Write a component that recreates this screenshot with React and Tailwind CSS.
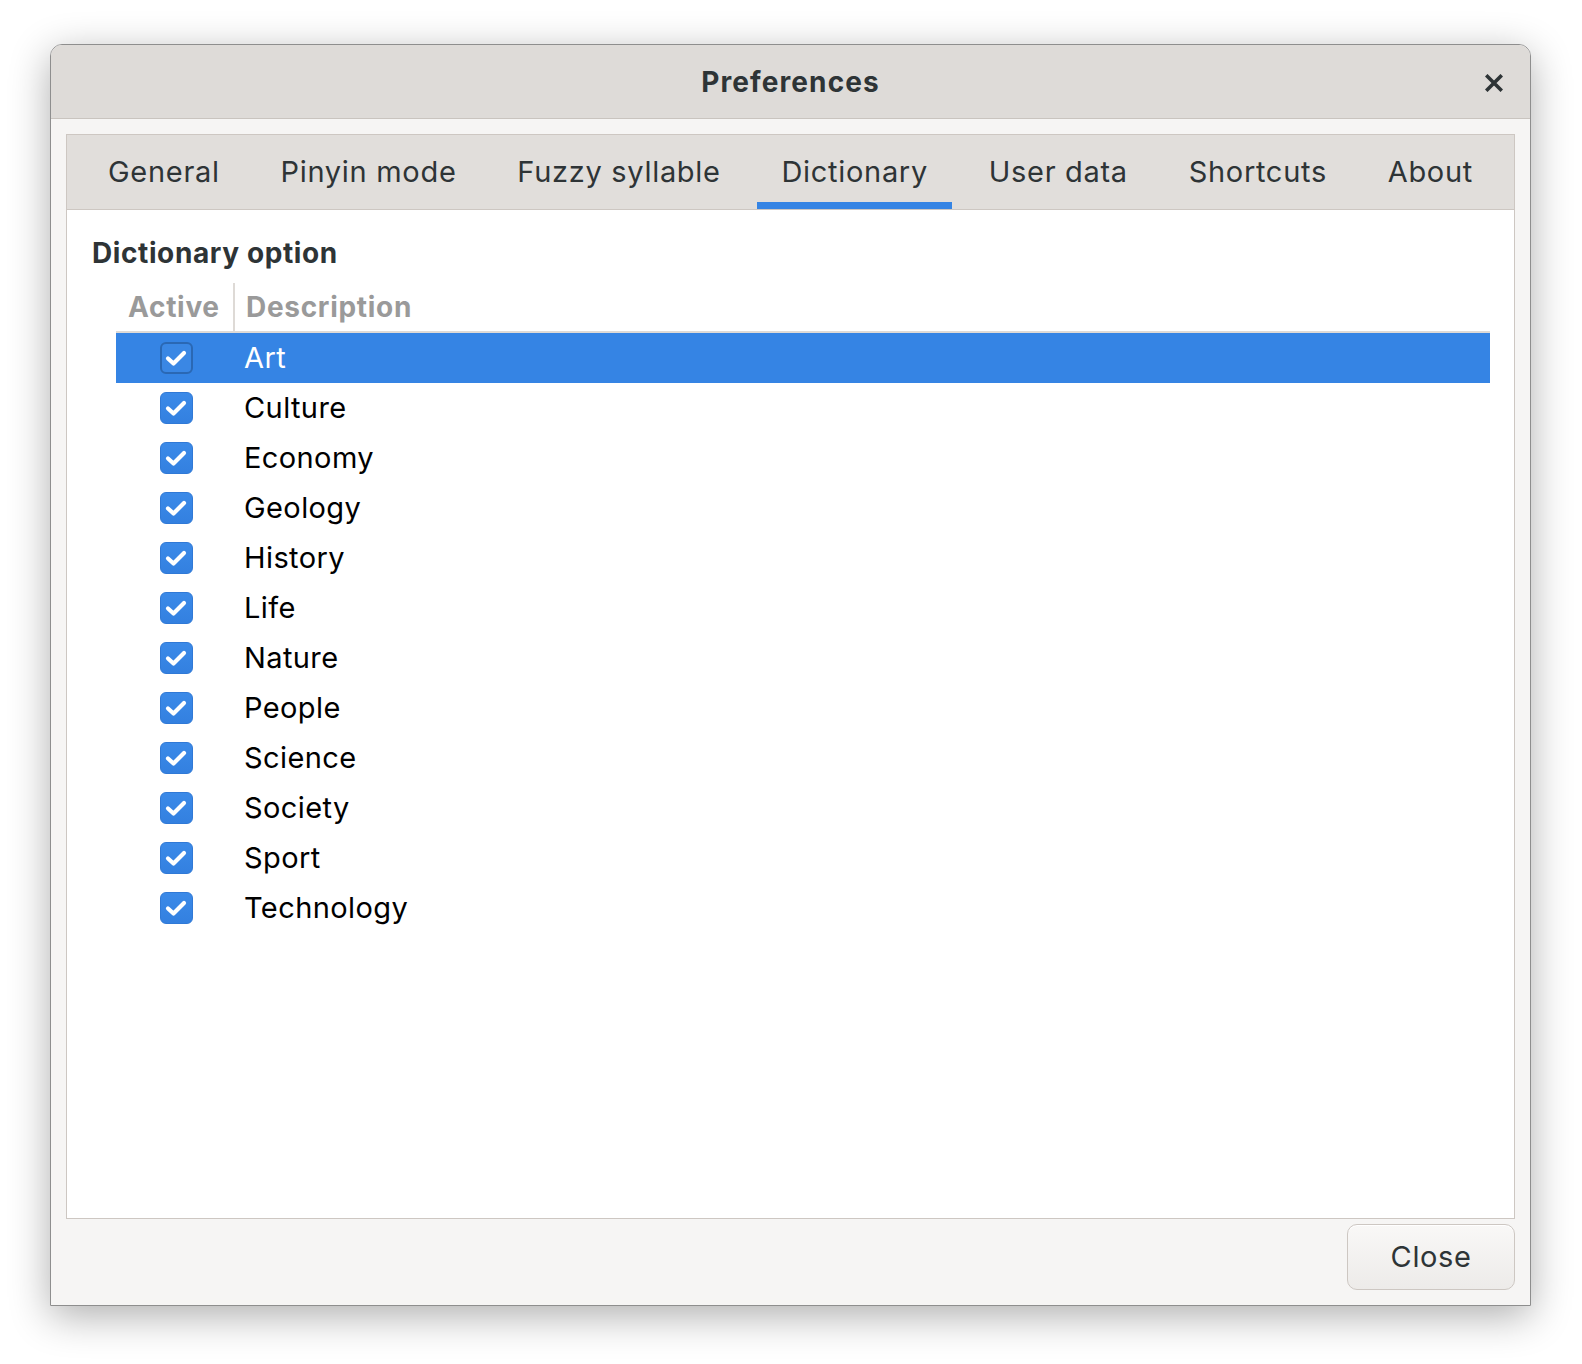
import { useState } from 'react';

const TABS = ['General', 'Pinyin mode', 'Fuzzy syllable', 'Dictionary', 'User data', 'Shortcuts', 'About'];

const DICTS = [
    'Art', 'Culture', 'Economy', 'Geology', 'History', 'Life',
    'Nature', 'People', 'Science', 'Society', 'Sport', 'Technology',
];

const font = { fontFamily: 'Inter, "Noto Sans", sans-serif' };

/**
 * Blue checked box, darker frame when the row is selected
 */
const CheckBox = ({ selected }) => (
    <div
        className={
            selected
                ? 'w-[33px] h-[32px] rounded-[6px] border-2 border-[#2a68b4] bg-[#3a87e4] flex items-center justify-center'
                : 'w-[33px] h-[32px] rounded-[6px] border border-[#3079d6] bg-gradient-to-b from-[#3b8ae8] to-[#3380e0] flex items-center justify-center'
        }
    >
        <svg width="22" height="18" viewBox="0 0 22 18" fill="none">
            <path d="M3 9.5 L8.5 14.5 L19 4" stroke="white" strokeWidth="4.2" strokeLinecap="round" strokeLinejoin="round" />
        </svg>
    </div>
);

const App = () => {
    const [active, setActive] = useState('Dictionary');
    const [selected, setSelected] = useState('Art');

    return (
        <div className="w-[1582px] h-[1364px] bg-white pt-[44px] pl-[50px]" style={font}>
            {/* Dialog window */}
            <div className="w-[1481px] h-[1262px] flex flex-col rounded-t-[12px] border border-[#8e8e8e] shadow-[0_10px_40px_rgba(0,0,0,0.32)] overflow-hidden">
                {/* Title bar */}
                <div className="relative h-[74px] shrink-0 bg-[#dedbd8] border-b border-[#c9c4bf] flex items-center justify-center">
                    <span className="text-[28px] font-bold text-[#2e3436] tracking-[1.1px]">Preferences</span>
                    <button className="absolute right-[26px] top-[28px] w-[20px] h-[20px] flex items-center justify-center">
                        <svg width="18" height="18" viewBox="0 0 18 18">
                            <path d="M2.5 2.5 L15.5 15.5 M15.5 2.5 L2.5 15.5" stroke="#2e3436" strokeWidth="3.6" strokeLinecap="square" />
                        </svg>
                    </button>
                </div>

                {/* Body */}
                <div className="flex-1 bg-[#f6f5f4] px-[15px] pt-[15px] pb-[15px] flex flex-col">
                    {/* Notebook */}
                    <div className="h-[1085px] border border-[#cdc7c2] flex flex-col">
                        {/* Tabs */}
                        <div className="h-[75px] shrink-0 bg-[#e1dedb] border-b border-[#cdc7c2] flex items-stretch justify-between px-[17px]">
                            {TABS.map((tab) => (
                                <button
                                    key={tab}
                                    onClick={() => setActive(tab)}
                                    className="relative px-[24px] flex items-center text-[29px] tracking-[0.7px] text-[#2e3436]"
                                >
                                    {tab}
                                    {active === tab && (
                                        <span className="absolute left-0 right-0 bottom-0 h-[7px] bg-[#3584e4]" />
                                    )}
                                </button>
                            ))}
                        </div>

                        {/* Page */}
                        <div className="flex-1 bg-white pt-[26px] pl-[25px] pr-[24px]">
                            <h2 className="text-[28px] leading-[34px] font-bold tracking-[0.6px] text-[#2e3436]">Dictionary option</h2>

                            {/* Tree view */}
                            <div className="ml-[24px] mt-[13px]">
                                <div className="h-[50px] flex items-stretch border-b-2 border-[#dedad6] text-[28px] font-bold tracking-[0.7px] text-[#9a9a9a]">
                                    <div className="w-[119px] border-r-2 border-[#dedad6] flex items-center pl-[12px]">Active</div>
                                    <div className="flex items-center pl-[11px]">Description</div>
                                </div>
                                {DICTS.map((name) => {
                                    const isSel = selected === name;
                                    return (
                                        <div
                                            key={name}
                                            onClick={() => setSelected(name)}
                                            className={
                                                isSel
                                                    ? 'h-[50px] flex items-center bg-[#3584e4] text-white'
                                                    : 'h-[50px] flex items-center text-black'
                                            }
                                        >
                                            <div className="w-[119px] flex justify-center pl-[1px]">
                                                <CheckBox selected={isSel} />
                                            </div>
                                            <span className="pl-[9px] text-[29px] tracking-[0.4px]">{name}</span>
                                        </div>
                                    );
                                })}
                            </div>
                        </div>
                    </div>

                    {/* Footer */}
                    <div className="flex justify-end mt-[5px]">
                        <button className="w-[168px] h-[66px] rounded-[10px] border border-[#cdc7c2] bg-gradient-to-b from-[#f9f8f7] to-[#edebe9] shadow-[inset_0_1px_0_white] text-[29px] tracking-[0.6px] text-[#2e3436]">
                            Close
                        </button>
                    </div>
                </div>
            </div>
        </div>
    );
};

export default App;
